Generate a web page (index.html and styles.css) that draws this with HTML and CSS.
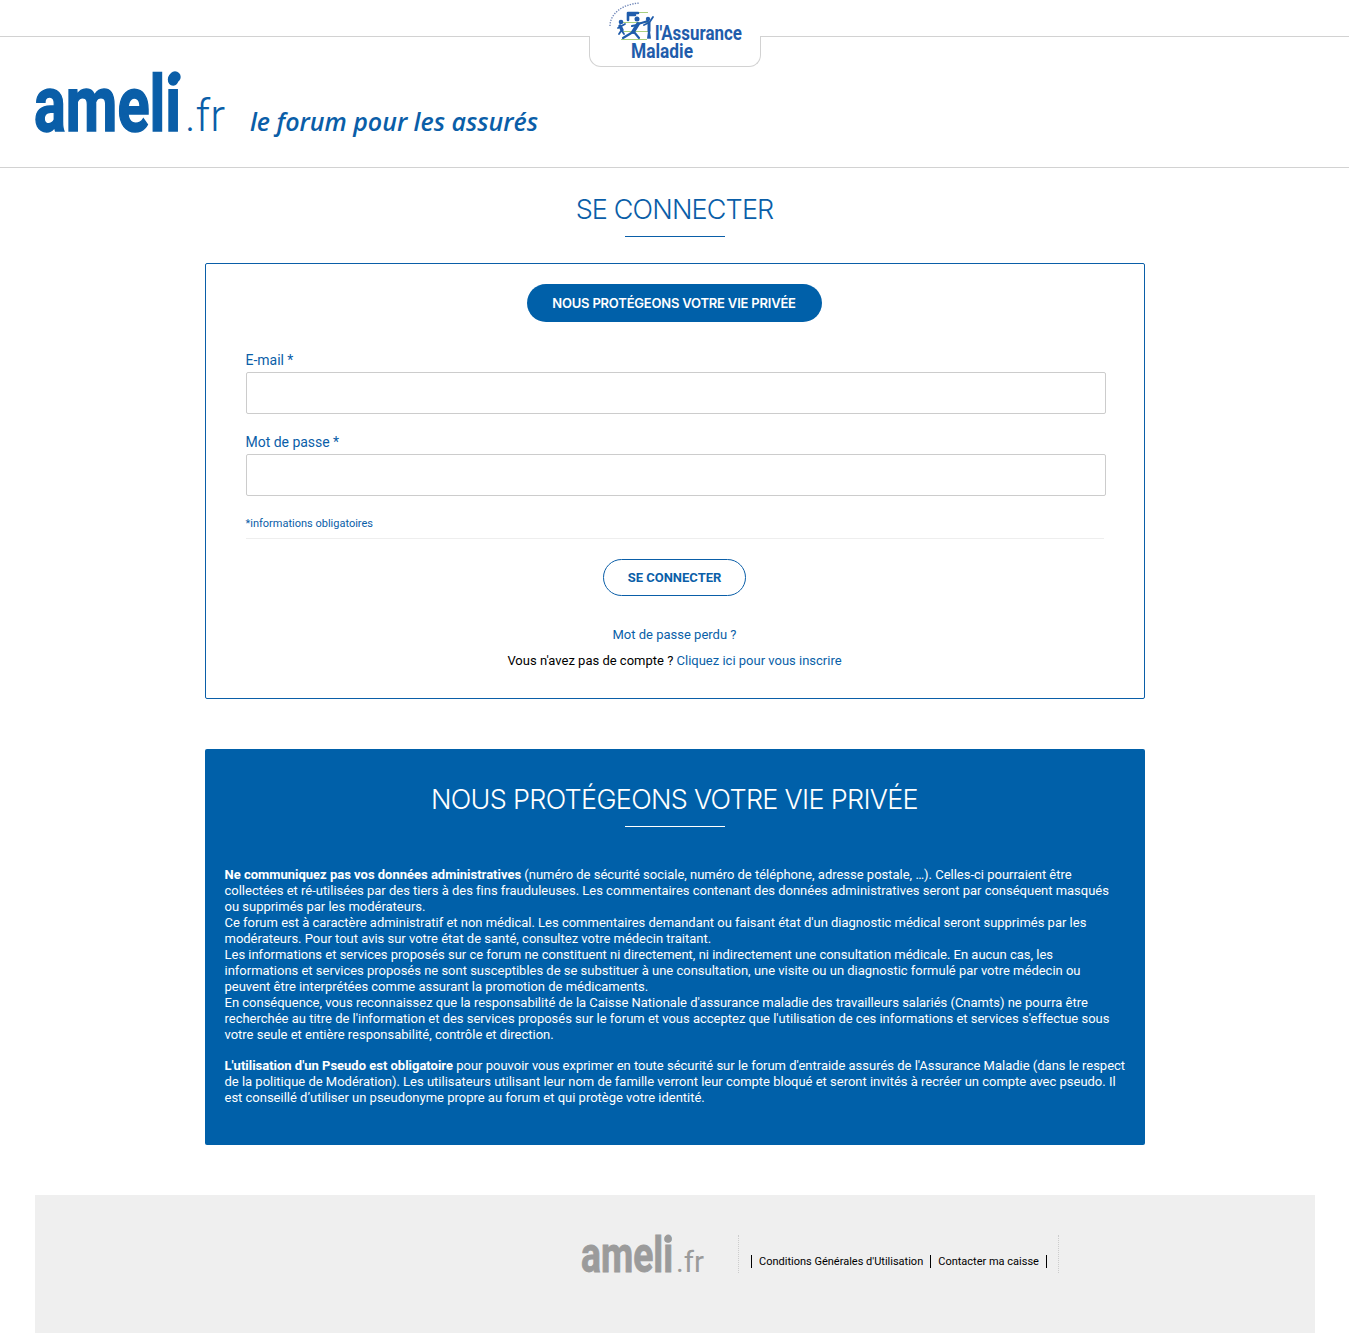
FILE: index.html
```html
<!DOCTYPE html>
<html lang="fr">
<head>
<meta charset="utf-8">
<title>Se connecter - ameli.fr</title>
<link rel="stylesheet" href="styles.css">
</head>
<body>
<header class="site-header">
  <div class="top-strip">
    <div class="am-tab">
      <svg class="am-logo" width="172" height="67" viewBox="0 0 172 67" aria-label="l'Assurance Maladie">
        <g fill="none" stroke="#a9cf7e" stroke-width="1">
          <path d="M38 12.500H59M31 22.500H59M31 31.500H59M32 39.500H58"/>
        </g>
        <g fill="none" stroke="#1f5cab" stroke-linecap="round" stroke-linejoin="round">
          <path stroke-width="2.600" d="M39 13H49M39 13L39 20M41 15L46 15"/>
          <path stroke-width="3.400" d="M31 26L33 30"/>
          <path stroke-width="1.800" d="M29 28L36 24M32 31L30 34M33 31L35 34"/>
          <path stroke-width="3.800" d="M49 24L44 32"/>
          <path stroke-width="2.200" d="M44 32L34 38M45 32L50 38M49 24L59 21M48 25L43 26"/>
          <path stroke-width="3" d="M60 23L60 31"/>
          <path stroke-width="1.800" d="M60 31L59 38M60 31L61 38M60 23L64 17M59 23L55 25"/>
        </g>
        <g fill="#1f5cab">
          <circle cx="32" cy="22" r="2.300"/>
          <circle cx="48" cy="19" r="2.500"/>
          <circle cx="59" cy="19" r="2.200"/>
        </g>
        <path fill="none" stroke="#6f86b8" stroke-width="1.400" stroke-dasharray="1.300 1.300" d="M21 26C21 14 33 4 51 3"/>
        <text class="am-text" x="66" y="40" textLength="87" lengthAdjust="spacingAndGlyphs">l'Assurance</text>
        <text class="am-text" x="42" y="58" textLength="62" lengthAdjust="spacingAndGlyphs">Maladie</text>
      </svg>
    </div>
  </div>
  <div class="brand-row">
    <svg class="ameli-logo" width="196" height="68" viewBox="0 0 196 68" aria-label="ameli.fr">
      <text class="ameli-word" x="0" y="62" textLength="147" lengthAdjust="spacingAndGlyphs">ameli</text>
      <circle class="ameli-dot" cx="141" cy="8" r="5.700"/>
      <text class="ameli-tld" x="151" y="62" textLength="40" lengthAdjust="spacingAndGlyphs">.fr</text>
    </svg>
    <span class="tagline">le forum pour les assurés</span>
  </div>
</header>

<main class="content">
  <h1 class="title">SE CONNECTER</h1>
  <section class="login-box">
    <div class="privacy-row"><a class="pill" href="#privacy">NOUS PROTÉGEONS VOTRE VIE PRIVÉE</a></div>
    <form class="login-form">
      <label class="field"><span class="field-label">E-mail *</span><input class="input" type="text"></label>
      <label class="field"><span class="field-label">Mot de passe *</span><input class="input" type="password"></label>
      <p class="required-note">*informations obligatoires</p>
      <div class="submit-row"><button class="submit" type="button">SE CONNECTER</button></div>
    </form>
    <p class="link-line lost"><a href="#">Mot de passe perdu ?</a></p>
    <p class="link-line">Vous n'avez pas de compte ? <a href="#">Cliquez ici pour vous inscrire</a></p>
  </section>

  <section class="privacy" id="privacy">
    <h2 class="privacy-title">NOUS PROTÉGEONS VOTRE VIE PRIVÉE</h2>
    <p class="privacy-text"><strong>Ne communiquez pas vos données administratives</strong> (numéro de sécurité sociale, numéro de téléphone, adresse postale, …). Celles-ci pourraient être collectées et ré-utilisées par des tiers à des fins frauduleuses. Les commentaires contenant des données administratives seront par conséquent masqués ou supprimés par les modérateurs.<br>Ce forum est à caractère administratif et non médical. Les commentaires demandant ou faisant état d'un diagnostic médical seront supprimés par les modérateurs. Pour tout avis sur votre état de santé, consultez votre médecin traitant.<br>Les informations et services proposés sur ce forum ne constituent ni directement, ni indirectement une consultation médicale. En aucun cas, les informations et services proposés ne sont susceptibles de se substituer à une consultation, une visite ou un diagnostic formulé par votre médecin ou peuvent être interprétées comme assurant la promotion de médicaments.<br>En conséquence, vous reconnaissez que la responsabilité de la Caisse Nationale d'assurance maladie des travailleurs salariés (Cnamts) ne pourra être recherchée au titre de l'information et des services proposés sur le forum et vous acceptez que l'utilisation de ces informations et services s'effectue sous votre seule et entière responsabilité, contrôle et direction.</p>
    <p class="privacy-text second"><strong>L'utilisation d'un Pseudo est obligatoire</strong> pour pouvoir vous exprimer en toute sécurité sur le forum d'entraide assurés de l'Assurance Maladie (dans le respect de la politique de Modération). Les utilisateurs utilisant leur nom de famille verront leur compte bloqué et seront invités à recréer un compte avec pseudo. Il est conseillé d’utiliser un pseudonyme propre au forum et qui protège votre identité.</p>
  </section>
</main>

<footer class="site-footer">
  <svg class="footer-logo" width="126" height="44" viewBox="0 0 126 44" aria-label="ameli.fr">
    <text class="footer-word" x="0" y="37" textLength="92" lengthAdjust="spacingAndGlyphs">ameli</text>
    <circle class="footer-dot" cx="87" cy="4" r="3.800"/>
    <text class="footer-tld" x="95" y="37" textLength="28" lengthAdjust="spacingAndGlyphs">.fr</text>
  </svg>
  <nav class="footer-nav">
    <a class="footer-link" href="#">Conditions Générales d'Utilisation</a>
    <a class="footer-link" href="#">Contacter ma caisse</a>
  </nav>
</footer>
</body>
</html>
```
FILE: styles.css
```css
* { box-sizing: border-box; }
html, body { margin: 0; padding: 0; }
body { background: #fff; color: #000; font-family: Roboto, "Liberation Sans", sans-serif; font-size: 13px; width: 1349px; }
a { color: #0a5fa8; text-decoration: none; }

.site-header { border-bottom: 1px solid #d2d2d2; height: 168px; }
.top-strip { border-bottom: 1px solid #d2d2d2; height: 37px; position: relative; }
.am-tab { position: absolute; left: 589px; top: 36px; width: 172px; height: 31px; background: #fff; border: 1px solid #d2d2d2; border-top: 0; border-radius: 0 0 12px 12px; }
.am-logo { position: absolute; left: -1px; top: -36px; overflow: visible; }
.am-text { font-family: Roboto, sans-serif; font-weight: 700; font-size: 21px; fill: #1f5cab; }

.brand-row { display: flex; align-items: flex-start; padding: 32px 0 0 34px; }
.ameli-logo { display: block; flex: none; overflow: visible; }
.ameli-word { font-family: Roboto, sans-serif; font-weight: 700; font-size: 78px; fill: #0a5ea8; stroke: #0a5ea8; stroke-width: 1.600px; }
.ameli-dot { fill: #0a5ea8; }
.ameli-tld { font-family: Roboto, sans-serif; font-weight: 300; font-size: 45px; fill: #0a5ea8; }
.tagline { font-family: "Open Sans", sans-serif; font-style: italic; font-weight: 600; font-size: 25px; line-height: 36px; color: #0a5ea8; margin: 34px 0 0 20px; }

.content { display: flex; flex-direction: column; align-items: center; }
.title { margin: 0; padding-top: 24px; height: 69px; font-family: Inter, sans-serif; font-weight: 300; font-size: 27px; letter-spacing: -0.85px; line-height: 36px; color: #0a5ea8; text-align: center; width: 100px; white-space: nowrap; display: flex; justify-content: center; border-bottom: 1px solid #0a5ea8; }

.login-box { width: 940px; height: 436px; margin-top: 26px; border: 1px solid #0a5ea8; border-radius: 2px; padding: 20px 41px 0 40px; }
.privacy-row { display: flex; justify-content: center; margin-bottom: 30px; }
.pill { display: block; width: 295px; text-align: center; white-space: nowrap; background: #0060a9; color: #fff; border-radius: 19px; height: 38px; line-height: 38px; font-family: Inter, sans-serif; font-weight: 600; font-size: 13px; letter-spacing: -0.2px; }
.login-form { display: block; }
.field { display: block; margin-bottom: 20px; }
.field-label { display: block; font-size: 14px; line-height: 16px; color: #0a5ea8; margin-bottom: 4px; letter-spacing: -0.02px; }
.input { display: block; width: 860px; height: 42px; border: 1px solid #ccc; border-radius: 2px; background: #fff; padding: 0 8px; }
.required-note { margin: 0; font-size: 11px; line-height: 14px; padding-top: 1px; height: 23px; color: #0a5ea8; border-bottom: 1px solid #eee; width: 858px; }
.submit-row { display: flex; justify-content: center; margin-top: 20px; }
.submit { height: 37px; width: 143px; border: 1px solid #0a5ea8; border-radius: 19px; background: #fff; color: #0a5ea8; font-family: Roboto, sans-serif; font-weight: 700; font-size: 13px; padding: 0 0 0 1px; }
.link-line { margin: 0; padding-left: 1px; text-align: center; font-size: 13px; line-height: 16px; color: #000; }
.lost { margin: 31px 0 10px; }

.privacy { width: 940px; height: 396px; margin-top: 50px; background: #0060a9; color: #fff; border-radius: 2px; padding: 33px 20px 0; }
.privacy-title { margin: 0 auto 40px; width: 100px; height: 45px; display: flex; justify-content: center; white-space: nowrap; font-family: Inter, sans-serif; font-weight: 300; font-size: 27px; letter-spacing: -0.7px; line-height: 36px; border-bottom: 1px solid #fff; }
.privacy-text { margin: 0; font-size: 13px; line-height: 16px; letter-spacing: -0.008px; }
.second { margin: 15px -2px 0 0; }

.site-footer { width: 1280px; height: 138px; margin: 50px 0 0 35px; background: #efefef; display: flex; align-items: flex-start; padding: 40px 0 0 546px; }
.footer-logo { display: block; flex: none; overflow: visible; }
.footer-word { font-family: Roboto, sans-serif; font-weight: 700; font-size: 50px; fill: #9b9b9b; stroke: #9b9b9b; stroke-width: 0.900px; }
.footer-dot { fill: #9b9b9b; }
.footer-tld { font-family: Roboto, sans-serif; font-weight: 400; font-size: 29px; fill: #9b9b9b; }
.footer-nav { display: flex; align-items: flex-end; height: 38px; width: 321px; margin-left: 31px; border-left: 1px dotted #ccc; border-right: 1px dotted #ccc; padding: 0 0 5px 12px; }
.footer-link { color: #000; font-size: 11px; line-height: 13px; border-left: 1px solid #000; padding: 0 7px; }
.footer-link:last-child { border-right: 1px solid #000; }
```
